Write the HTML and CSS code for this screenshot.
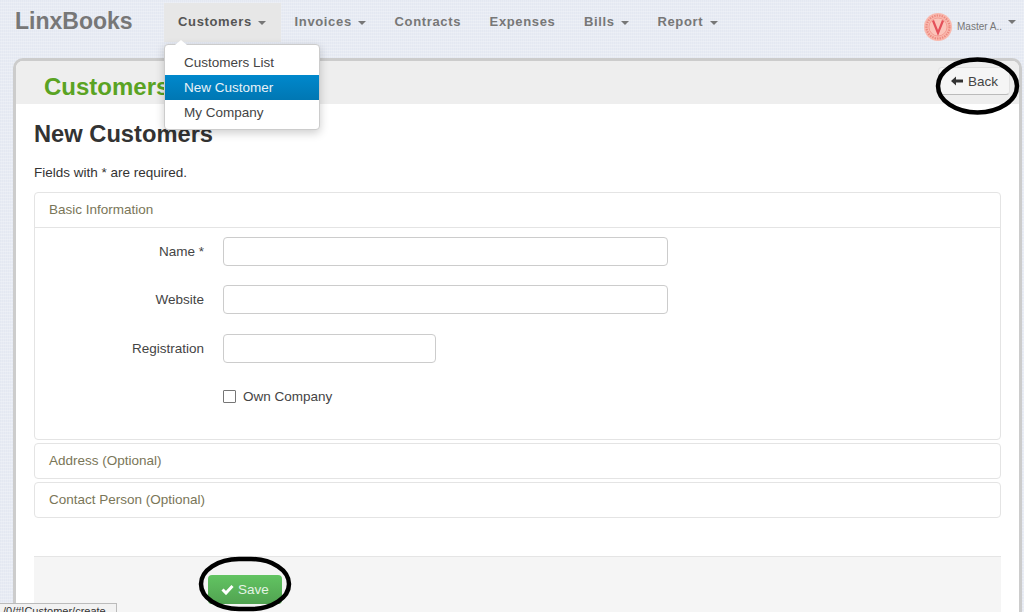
FILE: index.html
```html
<!Doctype html>
<html>
    <head>
        <title>LinxBooks</title>
        <link rel="stylesheet" href="styles.css">
    </head>
    <body>
        <nav class="navbar">
            <span class="brand">LinxBooks</span>
            <ul class="nav">
                <li class="nav-item open">Customers <b class="caret"></b></li>
                <li class="nav-item">Invoices <b class="caret"></b></li>
                <li class="nav-item">Contracts</li>
                <li class="nav-item">Expenses</li>
                <li class="nav-item">Bills <b class="caret"></b></li>
                <li class="nav-item">Report <b class="caret"></b></li>
            </ul>
            <div class="user">
                <svg class="avatar" width="28" height="28" viewBox="0 0 28 28">
                    <circle cx="14" cy="14" r="14" fill="#f9b9ae"/>
                    <circle cx="14" cy="14" r="9" fill="#fbc4ba" stroke="#ef8f85" stroke-width="0.7"/>
                    <circle cx="14" cy="14" r="11.5" fill="none" stroke="#ec8a80" stroke-width="2.2" stroke-dasharray="1.4 1.1"/>
                    <path d="M9 7.5 L14 20 L19 7.5" fill="none" stroke="#e4505a" stroke-width="2.2"/>
                </svg>
                <span class="user-name">Master A..</span>
                <b class="caret user-caret"></b>
            </div>
        </nav>

        <ul class="dropdown">
            <li>Customers List</li>
            <li class="active">New Customer</li>
            <li>My Company</li>
        </ul>

        <div class="page">
            <div class="page-head">
                <h2 class="page-title">Customers</h2>
                <a class="btn-back">
                    <svg width="12" height="10" viewBox="0 0 12 10"><path d="M0 5 L5 0.5 V3.5 H12 V6.5 H5 V9.5 Z" fill="#333"/></svg>
                    Back
                </a>
            </div>
            <div class="content">
                <h1>New Customers</h1>
                <p class="note">Fields with * are required.</p>

                <div class="group">
                    <div class="group-head">Basic Information</div>
                    <div class="group-body">
                        <div class="row">
                            <label>Name *</label>
                            <input class="input-wide" type="text">
                        </div>
                        <div class="row">
                            <label>Website</label>
                            <input class="input-wide" type="text">
                        </div>
                        <div class="row">
                            <label>Registration</label>
                            <input class="input-small" type="text">
                        </div>
                        <div class="row check-row">
                            <span class="checkbox"></span>
                            <span>Own Company</span>
                        </div>
                    </div>
                </div>
                <div class="group closed"><div class="group-head">Address (Optional)</div></div>
                <div class="group closed"><div class="group-head">Contact Person (Optional)</div></div>

                <div class="actions">
                    <a class="btn-save">
                        <svg width="13" height="11" viewBox="0 0 13 11"><path d="M1.5 5.5 L5 9 L11.5 2" fill="none" stroke="#fff" stroke-width="3"/></svg>
                        Save
                    </a>
                </div>
            </div>
        </div>

        <svg class="ink ink-back" width="86" height="62" viewBox="0 0 86 62">
            <ellipse cx="42.5" cy="29" rx="39.5" ry="26.5" fill="none" stroke="#000" stroke-width="4.5"/>
        </svg>
        <svg class="ink ink-save" width="94" height="60" viewBox="0 0 94 60">
            <rect x="3" y="5" width="88" height="50" rx="38" ry="25" fill="none" stroke="#000" stroke-width="4.5"/>
        </svg>
        <div class="status">/0/#!Customer/create</div>
    </body>
</html>
```

FILE: styles.css
```css
* {
    box-sizing: border-box;
}
html, body {
    height: 612px;
    overflow: hidden;
}
body {
    margin: 0;
    font-family: "Liberation Sans", Arial, sans-serif;
    font-size: 13.5px;
    color: #333;
    background-color: #e8ecf4;
    background-image:
        repeating-linear-gradient(0deg, rgba(255, 255, 255, 0.22) 0 1px, transparent 1px 3px),
        repeating-linear-gradient(90deg, rgba(205, 212, 228, 0.16) 0 1px, transparent 1px 2px);
}

/* top bar */
.navbar {
    display: flex;
    height: 58px;
    padding: 3px 0 0 15px;
}
.brand {
    width: 149px;
    font-size: 23px;
    font-weight: bold;
    line-height: 37px;
    color: #777;
}
.nav {
    display: flex;
    height: 39px;
    margin: 0;
    padding: 0;
    list-style: none;
}
.nav-item {
    padding: 0 14.5px 0 14px;
    font-size: 13px;
    font-weight: bold;
    letter-spacing: 0.65px;
    line-height: 38px;
    color: #777;
}
.nav-item.open {
    background-color: #e7e7e7;
    color: #555;
}
.caret {
    display: inline-block;
    margin-left: 2px;
    vertical-align: middle;
    border-top: 4px solid #777;
    border-left: 4px solid transparent;
    border-right: 4px solid transparent;
}
.user {
    display: flex;
    align-items: flex-start;
    margin-left: auto;
    padding: 10px 0 0;
    margin-right: 8px;
}
.avatar {
    flex: none;
}
.user-name {
    margin: 8px 0 0 5px;
    font-size: 10px;
    color: #777;
}
.user-caret {
    margin: 7px 0 0 6px;
}

/* open menu */
.dropdown {
    position: absolute;
    left: 164px;
    top: 44px;
    width: 156px;
    height: 86px;
    margin: 0;
    padding: 5px 0;
    list-style: none;
    background-color: #fff;
    border: 1px solid #ccc;
    border-radius: 4px;
    box-shadow: 0 3px 10px rgba(0, 0, 0, 0.2);
}
.dropdown::before {
    content: "";
    position: absolute;
    left: 10px;
    top: -5px;
    border-bottom: 5px solid #fff;
    border-left: 6px solid transparent;
    border-right: 6px solid transparent;
}
.dropdown li {
    height: 25px;
    padding-left: 19px;
    line-height: 25px;
    color: #444;
}
.dropdown li.active {
    color: #e8f2f8;
    background-color: #0081c2;
    background-image: linear-gradient(#0088cc, #0077b3);
}

/* page box */
.page {
    height: 560px;
    margin: 0 2px 0 13px;
    background-color: #fff;
    border: 3px solid #ccc;
    border-bottom: 0;
    border-radius: 10px 10px 0 0;
}
.page-head {
    display: flex;
    justify-content: space-between;
    height: 43px;
    padding: 8px 9px 0 28px;
    background-color: #eee;
    border-radius: 7px 7px 0 0;
}
.page-title {
    margin: 0;
    font-size: 24px;
    line-height: 36px;
    color: #5aa323;
}
.btn-back {
    display: flex;
    align-items: center;
    gap: 5px;
    width: 72px;
    height: 28px;
    margin-top: -2px;
    padding-left: 12px;
    color: #444;
    background-color: #f5f5f5;
    border: 1px solid #e2e2e2;
    border-bottom-color: #bbb;
    border-radius: 4px;
}
.content {
    padding: 15px 18px 0;
}
.content h1 {
    margin: 0;
    font-size: 23.7px;
    line-height: 30px;
    color: #333;
}
.note {
    margin: 14px 0 9px;
    line-height: 20px;
}

/* sections */
.group {
    margin-bottom: 3px;
    background-color: #fff;
    border: 1px solid #e4e4e4;
    border-radius: 4px;
}
.group-head {
    height: 34px;
    padding-left: 14px;
    line-height: 34px;
    color: #7a7658;
}
.group-body {
    height: 212px;
    padding-top: 9px;
    border-top: 1px solid #e4e4e4;
}
.row {
    display: flex;
    align-items: center;
    height: 29px;
    margin-bottom: 19.4px;
}
.row label {
    width: 169px;
    margin-right: 19px;
    text-align: right;
    color: #444;
}
.row input {
    height: 29px;
    padding: 0 10px;
    background-color: #fff;
    border: 1px solid #ccc;
    border-radius: 4px;
}
.input-wide {
    width: 445px;
}
.input-small {
    width: 213px;
}
.check-row {
    padding-left: 188px;
    color: #444;
}
.checkbox {
    width: 13px;
    height: 13px;
    margin-right: 7px;
    border: 1px solid #767676;
    border-radius: 1px;
}

/* bottom bar */
.actions {
    height: 60px;
    margin-top: 38px;
    padding: 18px 0 0 174px;
    background-color: #f5f5f5;
    border-top: 1px solid #e5e5e5;
}
.btn-save {
    display: flex;
    align-items: center;
    justify-content: center;
    gap: 4px;
    width: 74px;
    height: 29px;
    color: #e4f3e4;
    background-image: linear-gradient(#62c462, #51a351);
    border-radius: 4px;
}

/* marks drawn on the screenshot */
.ink {
    position: absolute;
}
.ink-back {
    left: 935px;
    top: 57px;
}
.ink-save {
    left: 198px;
    top: 554px;
}
.status {
    position: absolute;
    left: 0;
    bottom: 0;
    width: 117px;
    height: 9px;
    padding: 2px 0 0 3px;
    overflow: hidden;
    font-size: 11px;
    line-height: 11px;
    color: #333;
    background-color: #f2f2f2;
    border: 1px solid #bbb;
    border-left: 0;
    border-bottom: 0;
}
```
